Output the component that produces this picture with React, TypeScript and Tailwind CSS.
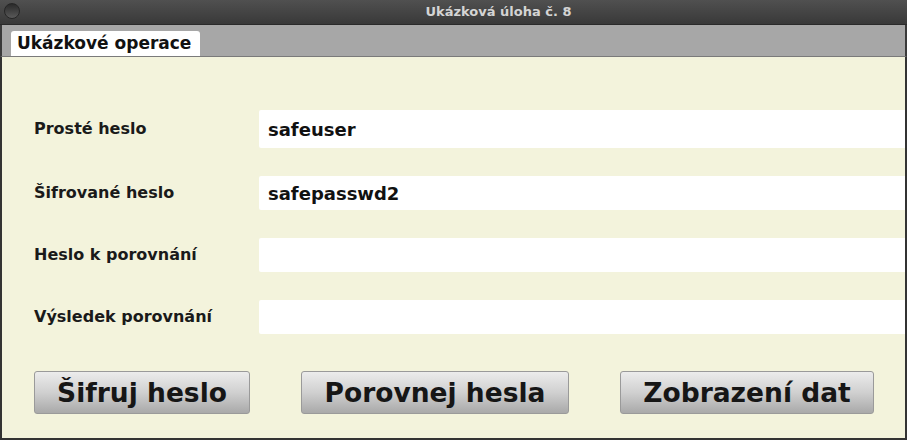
const font = { fontFamily: '"DejaVu Sans", Verdana, sans-serif' };

const rows = [
  { label: 'Prosté heslo', value: 'safeuser', h: 'h-[38px]' },
  { label: 'Šifrované heslo', value: 'safepasswd2', h: 'h-[34px]' },
  { label: 'Heslo k porovnání', value: '', h: 'h-[34px]' },
  { label: 'Výsledek porovnání', value: '', h: 'h-[34px]' },
];

const buttons = [
  { text: 'Šifruj heslo', w: 'w-[216px]' },
  { text: 'Porovnej hesla', w: 'w-[268px]' },
  { text: 'Zobrazení dat', w: 'w-[254px]' },
];

export default function App() {
  return (
    <div className="w-[907px] h-[440px] bg-[#f3f3dc] flex flex-col" style={font}>
      {/* title bar */}
      <div className="h-[25px] relative flex items-center justify-center bg-gradient-to-b from-[#505050] to-[#393939] border-b border-[#2a2a2a]">
        <div className="absolute left-[4px] top-[3px] w-[16px] h-[16px] rounded-full bg-gradient-to-b from-[#2a2a2a] to-[#5a5a5a] border border-[#262626]" />
        <span className="text-[13px] font-bold text-[#d4d4d4] pl-[90px]">Ukázková úloha č. 8</span>
      </div>

      {/* tabs */}
      <div className="h-[32px] bg-[#a7a7a7] border-l-2 border-r-2 border-[#3a3a3a] border-b border-b-[#7a7a7a] flex items-end pl-[9px]">
        <div className="h-[25px] w-[189px] bg-white rounded-t-[3px] flex items-center pl-[6px] text-[17px] font-bold text-[#111]">
          Ukázkové operace
        </div>
      </div>

      {/* content */}
      <div className="flex-1 border-l-2 border-r-2 border-b-2 border-[#333] flex flex-col pt-[53px]">
        <div className="flex flex-col gap-[28px]">
          {rows.map((r, i) => (
            <div key={i} className="flex items-center">
              <div className="w-[257px] pl-[32px] text-[16px] font-bold text-[#1a1a1a]">{r.label}</div>
              <div className={`flex-1 ${r.h} bg-white rounded-l-[2px] flex items-center pl-[9px] text-[18px] font-bold text-[#111]`}>
                {r.value}
              </div>
            </div>
          ))}
        </div>
        <div className="flex gap-[51px] pl-[32px] mt-[37px]">
          {buttons.map((b) => (
            <div
              key={b.text}
              className={`${b.w} h-[43px] rounded-[3px] border border-[#9a9a9a] bg-gradient-to-b from-[#ececec] via-[#d0d0d0] to-[#a9a9a9] flex items-center justify-center text-[26.5px] font-bold text-[#161616]`}
            >
              {b.text}
            </div>
          ))}
        </div>
      </div>
    </div>
  );
}
